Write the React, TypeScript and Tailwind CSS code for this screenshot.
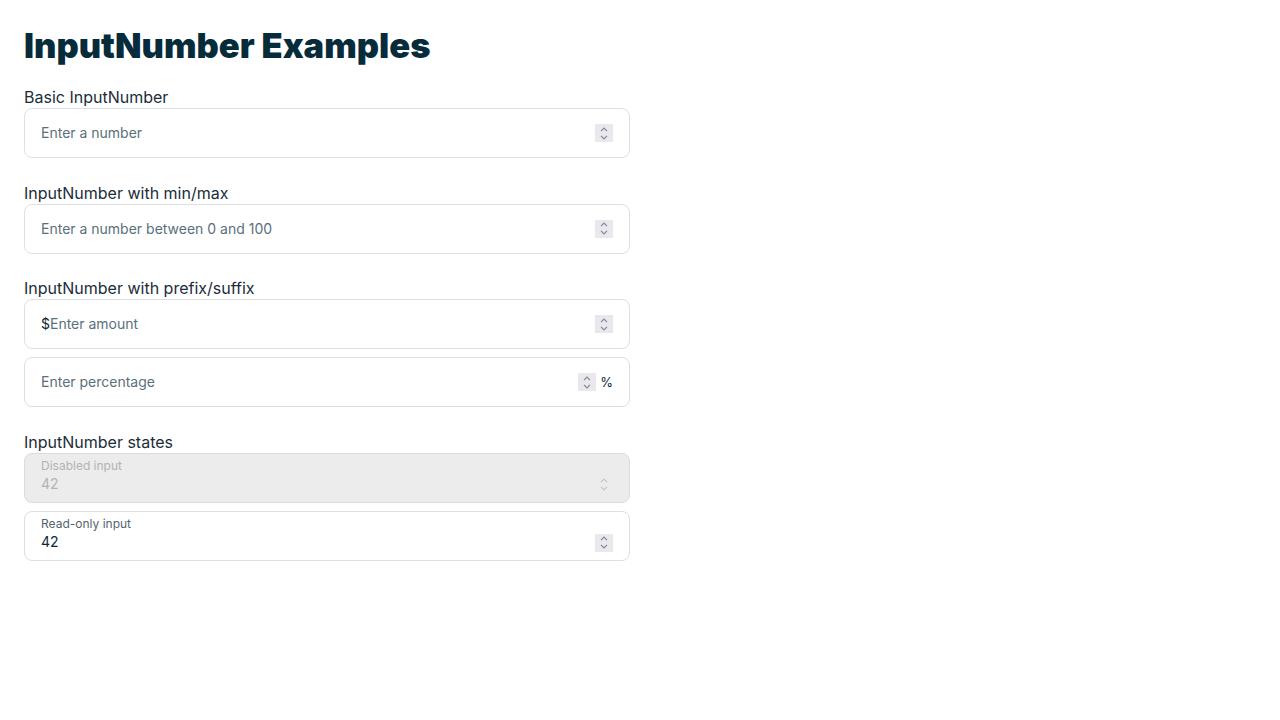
import React from "react";

const inputCls =
  "min-w-0 flex-1 bg-transparent outline-none [appearance:textfield] [&::-webkit-inner-spin-button]:appearance-none [&::-webkit-outer-spin-button]:appearance-none";

function Spinner({ faded }: { faded?: boolean }) {
  return (
    <span
      className={
        "flex h-[18px] w-[18px] shrink-0 flex-col items-center justify-center gap-[3px] " +
        (faded ? "bg-transparent text-[#c4c4c8]" : "bg-[#e8e8ed] text-[#85859a]")
      }
    >
      <svg width="8" height="5" viewBox="0 0 8 5" fill="none" stroke="currentColor" strokeWidth="1.2">
        <path d="M1 4.2 4 1.2 7 4.2" />
      </svg>
      <svg width="8" height="5" viewBox="0 0 8 5" fill="none" stroke="currentColor" strokeWidth="1.2">
        <path d="M1 0.8 4 3.8 7 0.8" />
      </svg>
    </span>
  );
}

function Section({ title, children }: { title: string; children: React.ReactNode }) {
  return (
    <div className="mb-[23.5px] flex flex-col">
      <div className="text-base leading-[22px] text-[#1b2d39]">{title}</div>
      <div className="flex flex-col gap-2">{children}</div>
    </div>
  );
}

function NumberField({
  placeholder,
  prefix,
  suffix,
  min,
  max,
}: {
  placeholder: string;
  prefix?: string;
  suffix?: string;
  min?: number;
  max?: number;
}) {
  return (
    <label className="flex h-[50px] items-center rounded-lg border border-[#dcdfe3] bg-white px-4 text-sm">
      {prefix && <span className="text-[#0a2a38]">{prefix}</span>}
      <input
        type="number"
        min={min}
        max={max}
        placeholder={placeholder}
        className={inputCls + " text-[#0a2a38] placeholder:text-[#5b6f7b]"}
      />
      <Spinner />
      {suffix && <span className="ml-1 text-[13px] text-[#0a2a38]">{suffix}</span>}
    </label>
  );
}

function LabeledField({ label, value, disabled }: { label: string; value: string; disabled?: boolean }) {
  return (
    <label
      className={
        "flex h-[50px] items-center rounded-lg border px-4 " +
        (disabled ? "border-[#dcdcdc] bg-[#ececec]" : "border-[#dcdfe3] bg-white")
      }
    >
      <div className="flex min-w-0 flex-1 flex-col self-start pt-1">
        <span className={"text-xs leading-4 " + (disabled ? "text-[#b3b3b3]" : "text-[#52656f]")}>
          {label}
        </span>
        <input
          type="number"
          defaultValue={value}
          disabled={disabled}
          readOnly={!disabled}
          className={
            inputCls + " w-full text-sm leading-5 " + (disabled ? "text-[#b3b3b3]" : "text-[#0a2a38]")
          }
        />
      </div>
      <div className="mt-[14px]">
        <Spinner faded={disabled} />
      </div>
    </label>
  );
}

export default function App() {
  return (
    <div className="min-h-screen bg-white px-6 pt-6" style={{ fontFamily: "Inter, 'Noto Sans', sans-serif" }}>
      <div className="w-[606px]">
        <h1 className="mb-5 mt-[2px] text-[34.5px] font-black leading-[40px] text-[#062b3b]">
          InputNumber Examples
        </h1>
        <Section title="Basic InputNumber">
          <NumberField placeholder="Enter a number" />
        </Section>
        <Section title="InputNumber with min/max">
          <NumberField placeholder="Enter a number between 0 and 100" min={0} max={100} />
        </Section>
        <Section title="InputNumber with prefix/suffix">
          <NumberField placeholder="Enter amount" prefix="$" />
          <NumberField placeholder="Enter percentage" suffix="%" />
        </Section>
        <Section title="InputNumber states">
          <LabeledField label="Disabled input" value="42" disabled />
          <LabeledField label="Read-only input" value="42" />
        </Section>
      </div>
    </div>
  );
}
